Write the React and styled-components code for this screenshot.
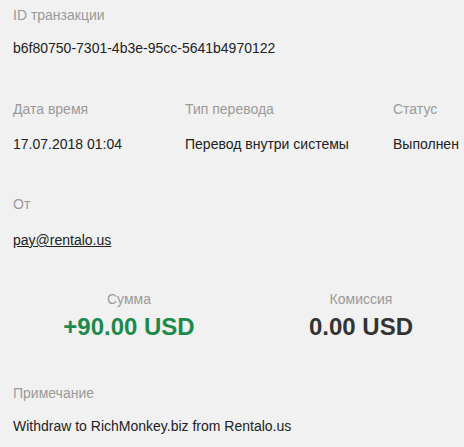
import React from 'react';
import styled, { createGlobalStyle } from 'styled-components';

const GlobalStyle = createGlobalStyle`
  body {
    margin: 0;
    background: #f1f1f1;
    font-family: Arial, "Liberation Sans", sans-serif;
    overflow: hidden;
  }
`;

const Container = styled.div`
  width: 477px;
  padding: 7px 0 0 13px;
  box-sizing: border-box;
  font-size: 14px;
  line-height: 16px;
  color: #222;
`;

const Section = styled.div`
  display: ${(p) => (p.$grid ? 'grid' : 'block')};
  grid-template-columns: ${(p) => p.$columns || 'none'};
  margin-bottom: ${(p) => p.$gap ?? 46}px;
`;

const Field = styled.div`
  text-align: ${(p) => (p.$center ? 'center' : 'left')};
`;

const Label = styled.div`
  color: #9a9a9a;
  margin-bottom: ${(p) => p.$space || 18}px;
`;

const Value = styled.div`
  color: #222;
  white-space: nowrap;
`;

const Link = styled.a`
  color: #222;
  text-decoration: underline;
  text-underline-offset: 1px;
`;

const Amount = styled.div`
  font-size: 24px;
  line-height: 28px;
  font-weight: bold;
  color: ${(p) => (p.$positive ? '#1b8a4a' : '#333')};
`;

const App = () => (
  <>
    <GlobalStyle />
    <Container>
      <Section $gap={45}>
        <Label $space={17}>ID транзакции</Label>
        <Value>b6f80750-7301-4b3e-95cc-5641b4970122</Value>
      </Section>
      <Section $grid $columns="172px 208px 1fr" $gap={44}>
        <Field>
          <Label $space={19}>Дата время</Label>
          <Value>17.07.2018 01:04</Value>
        </Field>
        <Field>
          <Label $space={19}>Тип перевода</Label>
          <Value>Перевод внутри системы</Value>
        </Field>
        <Field>
          <Label $space={19}>Статус</Label>
          <Value>Выполнен</Value>
        </Field>
      </Section>
      <Section $gap={43}>
        <Label $space={20}>От</Label>
        <Value><Link href="#">pay@rentalo.us</Link></Value>
      </Section>
      <Section $grid $columns="232px 232px" $gap={44}>
        <Field $center>
          <Label $space={6}>Сумма</Label>
          <Amount $positive>+90.00 USD</Amount>
        </Field>
        <Field $center>
          <Label $space={6}>Комиссия</Label>
          <Amount>0.00 USD</Amount>
        </Field>
      </Section>
      <Section $gap={0}>
        <Label $space={17}>Примечание</Label>
        <Value>Withdraw to RichMonkey.biz from Rentalo.us</Value>
      </Section>
    </Container>
  </>
);

export default App;
